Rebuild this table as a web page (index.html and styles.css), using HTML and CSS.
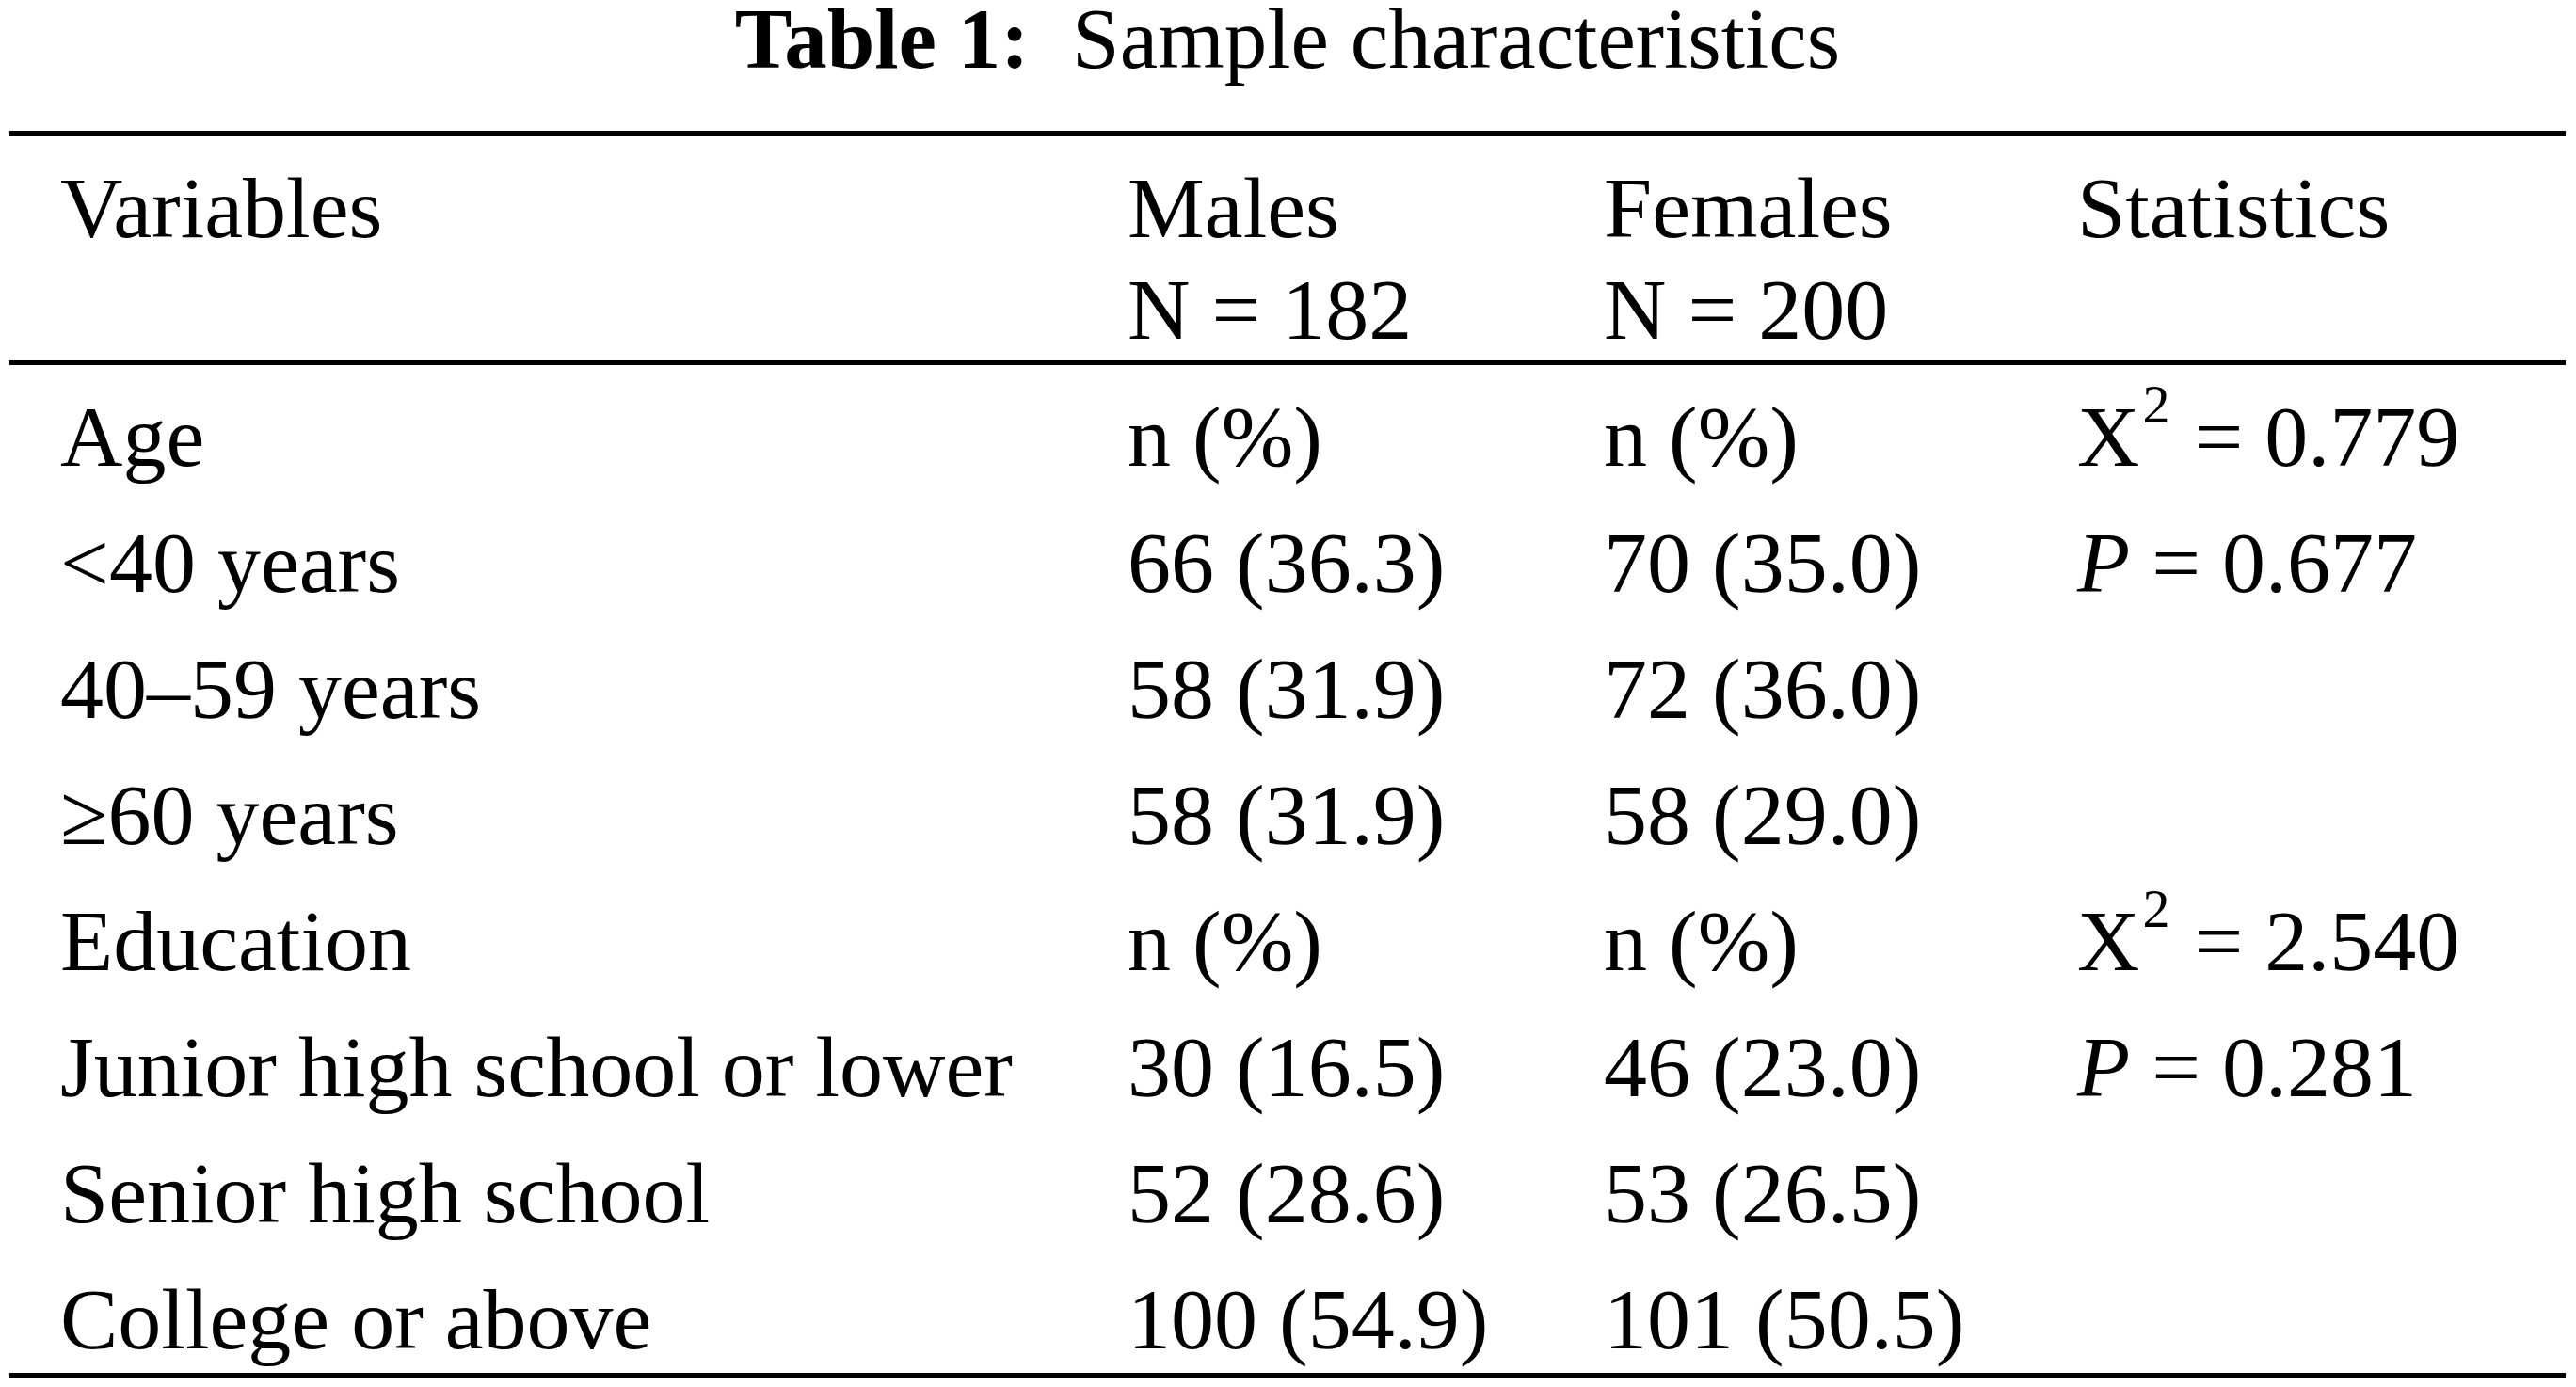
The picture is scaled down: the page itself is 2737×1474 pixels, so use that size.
FILE: index.html
```html
<!DOCTYPE html>
<html lang="en">
<head>
<meta charset="utf-8">
<title>Table 1: Sample characteristics</title>
<link rel="stylesheet" href="styles.css">
</head>
<body>
<div class="page">
  <div class="caption"><b>Table 1:</b>&nbsp; Sample characteristics</div>
  <div class="table">
    <div class="thead">
      <div class="cell">Variables</div>
      <div class="cell">Males<br>N = 182</div>
      <div class="cell">Females<br>N = 200</div>
      <div class="cell">Statistics</div>
    </div>
    <div class="tbody">
      <div class="cell">Age</div>
      <div class="cell">n (%)</div>
      <div class="cell">n (%)</div>
      <div class="cell">X<span class="sq">2</span> = 0.779</div>

      <div class="cell">&lt;40 years</div>
      <div class="cell">66 (36.3)</div>
      <div class="cell">70 (35.0)</div>
      <div class="cell"><i>P</i> = 0.677</div>

      <div class="cell">40–59 years</div>
      <div class="cell">58 (31.9)</div>
      <div class="cell">72 (36.0)</div>
      <div class="cell"></div>

      <div class="cell">≥60 years</div>
      <div class="cell">58 (31.9)</div>
      <div class="cell">58 (29.0)</div>
      <div class="cell"></div>

      <div class="cell">Education</div>
      <div class="cell">n (%)</div>
      <div class="cell">n (%)</div>
      <div class="cell">X<span class="sq">2</span> = 2.540</div>

      <div class="cell">Junior high school or lower</div>
      <div class="cell">30 (16.5)</div>
      <div class="cell">46 (23.0)</div>
      <div class="cell"><i>P</i> = 0.281</div>

      <div class="cell">Senior high school</div>
      <div class="cell">52 (28.6)</div>
      <div class="cell">53 (26.5)</div>
      <div class="cell"></div>

      <div class="cell">College or above</div>
      <div class="cell">100 (54.9)</div>
      <div class="cell">101 (50.5)</div>
      <div class="cell"></div>
    </div>
  </div>
</div>
</body>
</html>
```

FILE: styles.css
```css
html, body {
  margin: 0;
  padding: 0;
  background: #ffffff;
}

body {
  font-family: "Liberation Serif", "Times New Roman", serif;
  font-size: 92px;
  color: #000000;
}

.page {
  width: 2716px;
  margin-left: 10px;
}

.caption {
  text-align: center;
  font-size: 91px;
  line-height: 80px;
  margin-top: 2px;
  margin-bottom: 57px;
  white-space: nowrap;
}

.caption b {
  font-weight: bold;
}

.table {
  display: flex;
  flex-direction: column;
}

.thead,
.tbody {
  display: grid;
  grid-template-columns: 1134px 506px 503px 1fr;
  padding-left: 54px;
}

.thead {
  border-top: 5px solid #000000;
  border-bottom: 5px solid #000000;
  padding-top: 23px;
  line-height: 108px;
}

.tbody {
  border-bottom: 5px solid #000000;
  padding-top: 21px;
  padding-bottom: 2px;
  row-gap: 24px;
  line-height: 110px;
}

.cell {
  white-space: nowrap;
}

.sq {
  font-size: 58px;
  line-height: 0;
  vertical-align: 46px;
  margin-left: 3px;
  margin-right: 3px;
}
```
